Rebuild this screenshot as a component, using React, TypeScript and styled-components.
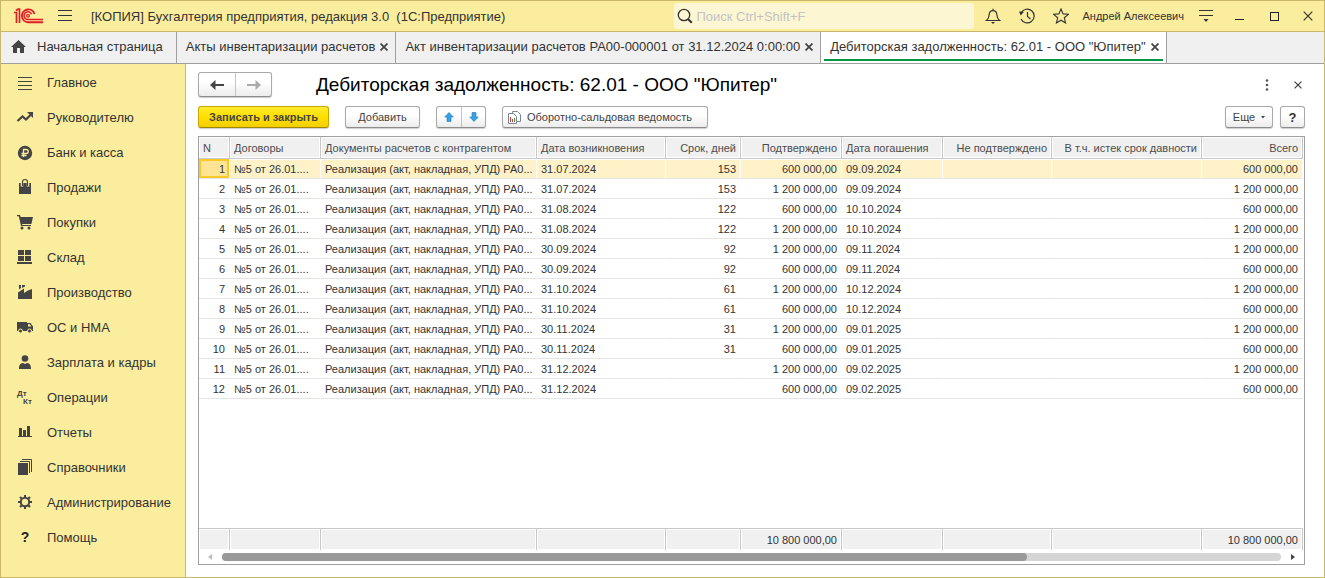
import React from "react";
import styled, { createGlobalStyle, css } from "styled-components";

const GlobalStyle = createGlobalStyle`
  *, *::before, *::after { box-sizing: border-box; }
  body { margin: 0; }
  body, button, input, table { font-family: "Liberation Sans", Arial, sans-serif; }
  button { padding: 0; color: inherit; cursor: pointer; }
  svg { display: block; flex: none; }
`;

const Window = styled.div`
  display: flex;
  flex-direction: column;
  min-height: 100vh;
  border: 1px solid #c9b867;
  background: #fff;
  color: #333;
  font-size: 13px;
`;

const TitleBar = styled.header`
  display: flex;
  align-items: center;
  height: 31px;
  background: #fbed9e;
  border-bottom: 1px solid #c9b867;
  padding: 0 8px 0 12px;
`;

const PlainButton = styled.button<{ $w?: number }>`
  display: flex;
  align-items: center;
  justify-content: center;
  width: ${(p) => p.$w ?? 16}px;
  height: 24px;
  flex: none;
  border: 0;
  background: none;
`;

const AppTitle = styled.h1`
  flex: 1;
  margin: 0 0 0 6px;
  font-size: 13px;
  font-weight: 400;
  white-space: pre;
`;

const SearchBox = styled.label`
  display: flex;
  align-items: center;
  gap: 3px;
  width: 300px;
  height: 26px;
  padding-left: 3px;
  border-radius: 3px;
  background: #fdf6d3;
`;

const SearchInput = styled.input`
  flex: 1;
  min-width: 0;
  border: 0;
  padding: 0;
  outline: 0;
  background: none;
  font-size: 13px;
  &::placeholder { color: #c3c3c3; opacity: 1; }
`;

const Tools = styled.div`
  display: flex;
  align-items: center;
  gap: 18px;
  margin-left: 11px;
`;

const UserLink = styled.a`
  margin: 0 14px 0 13px;
  color: #333;
  font-size: 11px;
  text-decoration: none;
  white-space: nowrap;
`;

const WindowButtons = styled.div`
  display: flex;
  gap: 18px;
  margin-left: 18px;
`;

const TabBar = styled.nav`
  display: flex;
  height: 32px;
  background: #f0f0f0;
  border-bottom: 1px solid #a0a0a0;
`;

const Tab = styled.div<{ $active?: boolean }>`
  display: flex;
  align-items: center;
  padding: 0 3px;
  border-right: 1px solid #a0a0a0;
  background: ${(p) => (p.$active ? "#fff" : "transparent")};
`;

const TabInner = styled.div<{ $active?: boolean; $home?: boolean }>`
  display: flex;
  align-items: center;
  align-self: stretch;
  gap: ${(p) => (p.$home ? 11 : 1)}px;
  margin-bottom: 2px;
  padding: ${(p) => (p.$home ? "2px 10px 0 7px" : "2px 0 0 6px")};
  border-bottom: 2px solid ${(p) => (p.$active ? "#009646" : "transparent")};
`;

const TabLink = styled.a`
  color: #333;
  text-decoration: none;
  white-space: nowrap;
`;

const Body = styled.div`
  display: flex;
  flex: 1;
`;

const Sidebar = styled.nav`
  width: 185px;
  flex: none;
  padding-top: 1px;
  background: #fbed9e;
  border-right: 1px solid #c9b867;
`;

const SideLink = styled.a`
  display: flex;
  align-items: center;
  gap: 13px;
  height: 35px;
  padding-left: 15px;
  color: #333;
  text-decoration: none;
`;

const Main = styled.main`
  display: flex;
  flex: 1;
  flex-direction: column;
  min-width: 0;
  padding: 8px 19px 12px 12px;
`;

const Heading = styled.div`
  display: flex;
  align-items: center;
  gap: 16px;
  height: 25px;
`;

const FormTitle = styled.h2`
  flex: 1;
  margin: 0 0 0 28px;
  color: #000;
  font-size: 19px;
  font-weight: 400;
`;

const Toolbar = styled.div`
  display: flex;
  align-items: center;
  gap: 16px;
  margin: 9px 0 8px;
`;

const Spacer = styled.div`
  flex: 1;
`;

const RightGroup = styled.div`
  display: flex;
  gap: 7px;
`;

const raised = css`
  border: 1px solid #a9a9a9;
  border-bottom-color: #8c8c8c;
  border-radius: 3px;
  background: linear-gradient(#fff 40%, #ececec);
  box-shadow: 0 1px 1px #ccc;
`;

const Button = styled.button<{ $primary?: boolean; $start?: boolean; $w: number }>`
  display: flex;
  align-items: center;
  justify-content: ${(p) => (p.$start ? "flex-start" : "center")};
  gap: 6px;
  width: ${(p) => p.$w}px;
  height: 22px;
  padding: 0 5px;
  font-size: 11px;
  white-space: nowrap;
  color: #444;
  ${raised}
  ${(p) =>
    p.$primary &&
    css`
      border-color: #c8a800;
      border-bottom-color: #a08600;
      background: linear-gradient(#ffea2e, #ffdf00 50%, #f3cf00);
      font-weight: 700;
    `}
`;

const HelpMark = styled.b`
  color: #333;
  font-size: 13px;
`;

const ButtonPair = styled.div<{ $h: number }>`
  display: flex;
  height: ${(p) => p.$h}px;
  ${raised}
`;

const PairButton = styled.button<{ $w: number }>`
  display: flex;
  align-items: center;
  justify-content: center;
  width: ${(p) => p.$w}px;
  border: 0;
  background: none;
  & + & { border-left: 1px solid #c4c4c4; }
`;

const GridPanel = styled.section`
  display: flex;
  flex: 1;
  flex-direction: column;
  border: 1px solid #a0a0a0;
`;

const TableArea = styled.div`
  display: flex;
  flex: 1;
  padding-right: 1px;
`;

const Table = styled.table`
  flex: 1;
  width: 100%;
  table-layout: fixed;
  border-collapse: separate;
  border-spacing: 0;
  font-size: 11px;
`;

type CellProps = { $right?: boolean };

const cell = css<CellProps>`
  padding: 0 4px;
  text-align: ${(p) => (p.$right ? "right" : "left")};
  white-space: nowrap;
`;

const Th = styled.th<CellProps>`
  ${cell}
  height: 22px;
  border-right: 1px solid #c8c8c8;
  border-bottom: 1px solid #c8c8c8;
  background: #f0f0f0;
  box-shadow: inset 0 0 0 1px #fff;
  color: #4c4c4c;
  font-weight: 400;
`;

const Td = styled.td<CellProps & { $selected?: boolean; $current?: boolean }>`
  ${cell}
  height: 20px;
  padding-top: 1px;
  border-right: 1px solid transparent;
  border-bottom: 1px solid #e4e4e4;
  ${(p) =>
    p.$selected &&
    css`
      border-right-color: #fff;
      background: #fff2c8;
      box-shadow: inset 0 1px 0 #fff;
    `}
  ${(p) =>
    p.$current &&
    css`
      background: #fee493;
      box-shadow: inset 0 0 0 2px #fbc926;
    `}
`;

const FillerCell = styled.td`
  padding: 0;
`;

const FootCell = styled.td<CellProps>`
  ${cell}
  height: 22px;
  border-top: 1px solid #c8c8c8;
  border-right: 1px solid #c8c8c8;
  background: #f0f0f0;
  box-shadow: inset 0 0 0 1px #fff;
`;

const ScrollRow = styled.div`
  display: flex;
  align-items: center;
  height: 14px;
  padding: 0 3px;
`;

const ArrowButton = styled(PlainButton)`
  height: 14px;
`;

const ScrollTrack = styled.div`
  flex: 1;
  height: 8px;
  margin: 0 4px;
  border-radius: 4px;
  background: #d5d5d5;
`;

const ScrollThumb = styled.div`
  width: 76%;
  height: 8px;
  border-radius: 4px;
  background: #999;
`;

const Logo = () => (
  <svg width="31" height="16" viewBox="0 0 31 16" fill="none" stroke="#df1f26">
    <path d="M1 4.500h2.500V15M3 2.500 5 1.200h1.500V15" strokeWidth="1.700" />
    <path d="M21.500 6A6.400 6.400 0 1 0 15 14.200H30" strokeWidth="1.900" />
    <path d="M18.600 6.200A3.900 3.900 0 1 0 15 11.600H30" strokeWidth="1.500" />
    <circle cx="15" cy="7.800" r="1.400" strokeWidth="1.300" />
  </svg>
);

const BurgerIcon = () => (
  <svg width="14" height="12" viewBox="0 0 14 12" stroke="#333" shapeRendering="crispEdges">
    <path d="M0 .5h14M0 5.500h14M0 10.500h14" />
  </svg>
);

const SearchIcon = () => (
  <svg width="16" height="16" viewBox="0 0 16 16" fill="none" stroke="#333" strokeWidth="1.3">
    <circle cx="7" cy="7" r="5.700" />
    <path d="m11.200 11.200 3.600 3.600" strokeWidth="2" />
  </svg>
);

const BellIcon = () => (
  <svg width="16" height="16" viewBox="0 0 16 16" fill="none" stroke="#333" strokeWidth="1.2">
    <path d="M1.500 12.500c2-1.500 2.500-3 2.700-6C4.400 4 5.800 2.700 8 2.700S11.600 4 11.800 6.500c.2 3 .7 4.500 2.700 6zM8 .8v2" />
    <path d="M6 14h4l-2 2z" fill="#333" stroke="none" />
  </svg>
);

const HistoryIcon = () => (
  <svg width="16" height="16" viewBox="0 0 16 16" fill="none" stroke="#333" strokeWidth="1.2">
    <path d="M2.200 4.700A6.900 6.900 0 1 1 2 11M8.500 4v4.500l3 2.500" />
    <path d="M0 3.500 5 3.700 1.700 7.500z" fill="#333" stroke="none" />
  </svg>
);

const StarIcon = () => (
  <svg width="16" height="16" viewBox="0 0 16 16" fill="none" stroke="#333" strokeWidth="1.1">
    <path d="m8 1 2.100 4.900 5.300.4-4.100 3.500 1.300 5.200L8 12.200 3.400 15l1.300-5.200L.6 6.300l5.300-.4z" />
  </svg>
);

const ServiceIcon = () => (
  <svg width="14" height="12" viewBox="0 0 14 12" stroke="#333">
    <path d="M0 .5h14M0 5.500h14" shapeRendering="crispEdges" />
    <path d="M4.500 9h5L7 12z" fill="#333" stroke="none" />
  </svg>
);

const MinimizeIcon = () => (
  <svg width="10" height="10" viewBox="0 0 10 10" stroke="#222" shapeRendering="crispEdges">
    <path d="M0 8.500h9" />
  </svg>
);

const MaximizeIcon = () => (
  <svg width="10" height="10" viewBox="0 0 10 10" fill="none" stroke="#222" shapeRendering="crispEdges">
    <path d="M1.500 1.500h8v8h-8z" />
  </svg>
);

const CrossIcon = ({ size = 10, width = 1.2, color = "#333" }) => (
  <svg width={size} height={size} viewBox="0 0 10 10" stroke={color} strokeWidth={width}>
    <path d="m.7.7 8.600 8.600M9.300.7.7 9.300" />
  </svg>
);

const HomeIcon = () => (
  <svg width="15" height="13" viewBox="0 0 15 13" fill="#444">
    <path d="M7.500 0 15 7h-2v6H9V8H6v5H2V7H0z" />
  </svg>
);

const BackArrow = ({ color = "#444", flip = false }) => (
  <svg width="14" height="10" viewBox="0 0 14 10" fill={color}>
    <path d={flip ? "M14 5 8.500 0v4H0v2h8.500v4z" : "M0 5 5.500 0v4H14v2H5.500v4z"} />
  </svg>
);

const MoveArrow = ({ down = false }) => (
  <svg width="10" height="10" viewBox="0 0 10 10" fill="#36a2e6" stroke="#2379ad" strokeWidth=".6">
    <path d={down ? "M5 9.500 .7 5H3V.5h4V5h2.300z" : "M5 .5 .7 5H3v4.500h4V5h2.300z"} />
  </svg>
);

const ReportIcon = () => (
  <svg width="13" height="13" viewBox="0 0 13 13" fill="#fff" stroke="#7b8790">
    <path d="M4.500.5h5l3 3v7h-8z" />
    <path d="M.5 2.500h5l3 3v7h-8z" />
    <path d="M2.500 6v5M4.500 8v3" stroke="#d0443a" />
    <path d="M6.500 7v4" stroke="#3c9b51" />
  </svg>
);

const DotsIcon = () => (
  <svg width="4" height="12" viewBox="0 0 4 12" fill="#555">
    <circle cx="2" cy="1.500" r="1.300" />
    <circle cx="2" cy="6" r="1.300" />
    <circle cx="2" cy="10.500" r="1.300" />
  </svg>
);

const CaretIcon = () => (
  <svg width="4" height="3" viewBox="0 0 4 3" fill="#444">
    <path d="M0 0h4L2 2.500z" />
  </svg>
);

const Triangle = ({ right = false }) => (
  <svg width="4" height="6" viewBox="0 0 4 6" fill={right ? "#444" : "#bbb"}>
    <path d={right ? "M0 0v6l4-3z" : "M4 0v6L0 3z"} />
  </svg>
);

const sideIcons: Record<string, React.ReactNode> = {
  main: <path d="M2 4.500h14M2 8.500h14M2 12.500h14M2 16.500h14" stroke="#444" shapeRendering="crispEdges" />,
  chart: (
    <>
      <path d="m1.500 13 5-4.500 3.500 3L14.500 7" fill="none" stroke="#444" strokeWidth="2.200" />
      <path d="M11 4h6v6z" />
    </>
  ),
  ruble: (
    <>
      <circle cx="9" cy="10" r="7.200" />
      <path d="M7.500 14V6.500h2.700a2 2 0 0 1 0 4H5.500M5.500 12.500h5" fill="none" stroke="#fbed9e" strokeWidth="1.300" />
    </>
  ),
  bag: (
    <>
      <path d="M3 5h12v11H3z" />
      <path d="M6 8.500V5a3 3 0 0 1 6 0v3.500" fill="none" stroke="#fbed9e" strokeWidth="2.600" />
      <path d="M6.500 8V4a2.500 2.500 0 0 1 5 0v4" fill="none" stroke="#444" strokeWidth="1.100" />
    </>
  ),
  cart: (
    <>
      <path d="M1 2h3l.7 2H17l-1.600 7H6l.3 1H15V13H5L2.800 3.300H1z" />
      <circle cx="6" cy="15" r="1.500" />
      <circle cx="13" cy="15" r="1.500" />
    </>
  ),
  store: <path d="M2 2h6v5H2zM9 2h6v5H9zM2 8h6v5H2zM9 8h6v5H9zM1 14h15v2H1z" />,
  factory: <path d="M2 16V9.500L8 5.500V10l4-2.500 4-1.500v10zM3 2h2v3L3 6.500zM6 2h3v1.500L6 5z" />,
  truck: (
    <>
      <path d="M1 4h10v9H1zM11 5h3.500L17 8.500V13h-6z" />
      <path d="M12 6.300h2l1.300 2.200H12z" fill="#fbed9e" />
      <circle cx="4.500" cy="13" r="2" stroke="#fbed9e" />
      <circle cx="13.500" cy="13" r="2" stroke="#fbed9e" />
    </>
  ),
  person: (
    <>
      <circle cx="9" cy="5.500" r="3.300" />
      <path d="M3 16c0-4 1-5.500 4-6l2 1 2-1c3 .5 4 2 4 6z" />
    </>
  ),
  ops: (
    <g fontFamily="Liberation Sans" fontSize="8" fontWeight="700">
      <text x="1" y="8">Дт</text>
      <text x="7" y="16">Кт</text>
    </g>
  ),
  bars: <path d="M3 5h3v8H3zM7 7h3v6H7zM11 3h3v10h-3zM2 13h14v1H2z" />,
  books: (
    <>
      <path d="M2 5h10v12H2z" />
      <path d="M4 3.500h9.500V15M6 1.500h9.500V14" fill="none" stroke="#444" />
    </>
  ),
  gear: (
    <>
      <circle cx="9" cy="9" r="4.200" fill="none" stroke="#444" strokeWidth="2" />
      <path d="M9 2v2.500M9 13.500V16M2 9h2.500M13.500 9H16M4 4l2 2M12 12l2 2M14 4l-2 2M6 12l-2 2" stroke="#444" strokeWidth="2" />
    </>
  ),
  help: (
    <text x="9" y="14" textAnchor="middle" fontFamily="Liberation Sans" fontSize="14" fontWeight="700" fill="#222">?</text>
  ),
};

const sections = [
  ["main", "Главное"],
  ["chart", "Руководителю"],
  ["ruble", "Банк и касса"],
  ["bag", "Продажи"],
  ["cart", "Покупки"],
  ["store", "Склад"],
  ["factory", "Производство"],
  ["truck", "ОС и НМА"],
  ["person", "Зарплата и кадры"],
  ["ops", "Операции"],
  ["bars", "Отчеты"],
  ["books", "Справочники"],
  ["gear", "Администрирование"],
  ["help", "Помощь"],
];

const tabs = [
  "Акты инвентаризации расчетов",
  "Акт инвентаризации расчетов РА00-000001 от 31.12.2024 0:00:00",
  'Дебиторская задолженность: 62.01 - ООО "Юпитер"',
];

const columns: { title: string; width?: number; right?: boolean }[] = [
  { title: "N", width: 31 },
  { title: "Договоры", width: 91 },
  { title: "Документы расчетов с контрагентом" },
  { title: "Дата возникновения", width: 129 },
  { title: "Срок, дней", width: 75, right: true },
  { title: "Подтверждено", width: 101, right: true },
  { title: "Дата погашения", width: 101 },
  { title: "Не подтверждено", width: 109, right: true },
  { title: "В т.ч. истек срок давности", width: 150, right: true },
  { title: "Всего", width: 101, right: true },
];

const contract = "№5 от 26.01....";
const documentName = "Реализация (акт, накладная, УПД) РА0...";
const small = "600 000,00";
const large = "1 200 000,00";
const debts = [
  ["31.07.2024", "153", small, "09.09.2024"],
  ["31.07.2024", "153", large, "09.09.2024"],
  ["31.08.2024", "122", small, "10.10.2024"],
  ["31.08.2024", "122", large, "10.10.2024"],
  ["30.09.2024", "92", large, "09.11.2024"],
  ["30.09.2024", "92", small, "09.11.2024"],
  ["31.10.2024", "61", large, "10.12.2024"],
  ["31.10.2024", "61", small, "10.12.2024"],
  ["30.11.2024", "31", large, "09.01.2025"],
  ["30.11.2024", "31", small, "09.01.2025"],
  ["31.12.2024", "", large, "09.02.2025"],
  ["31.12.2024", "", small, "09.02.2025"],
];

const total = "10 800 000,00";
const totals = ["", "", "", "", "", total, "", "", "", total];

export default function App() {
  return (
    <>
      <GlobalStyle />
      <Window>
        <TitleBar>
          <Logo />
          <PlainButton $w={41} aria-label="Меню"><BurgerIcon /></PlainButton>
          <AppTitle>{"[КОПИЯ] Бухгалтерия предприятия, редакция 3.0  (1С:Предприятие)"}</AppTitle>
          <SearchBox>
            <SearchIcon />
            <SearchInput type="search" placeholder="Поиск Ctrl+Shift+F" aria-label="Поиск" />
          </SearchBox>
          <Tools>
            <PlainButton aria-label="Оповещения"><BellIcon /></PlainButton>
            <PlainButton aria-label="История"><HistoryIcon /></PlainButton>
            <PlainButton aria-label="Избранное"><StarIcon /></PlainButton>
          </Tools>
          <UserLink href="#user">Андрей Алексеевич</UserLink>
          <PlainButton aria-label="Сервис"><ServiceIcon /></PlainButton>
          <WindowButtons>
            <PlainButton aria-label="Свернуть"><MinimizeIcon /></PlainButton>
            <PlainButton aria-label="Развернуть"><MaximizeIcon /></PlainButton>
            <PlainButton aria-label="Закрыть программу"><CrossIcon /></PlainButton>
          </WindowButtons>
        </TitleBar>

        <TabBar aria-label="Открытые окна">
          <Tab>
            <TabInner $home>
              <HomeIcon />
              <TabLink href="#home">Начальная страница</TabLink>
            </TabInner>
          </Tab>
          {tabs.map((name, i) => (
            <Tab key={name} $active={i === 2}>
              <TabInner $active={i === 2}>
                <TabLink href="#tab">{name}</TabLink>
                <PlainButton aria-label="Закрыть вкладку"><CrossIcon size={8} width={2.2} color="#444" /></PlainButton>
              </TabInner>
            </Tab>
          ))}
        </TabBar>

        <Body>
          <Sidebar aria-label="Разделы">
            {sections.map(([icon, name]) => (
              <SideLink key={name} href={`#${icon}`}>
                <svg width="18" height="19" viewBox="0 0 18 19" fill="#444" aria-hidden="true">
                  {sideIcons[icon]}
                </svg>
                {name}
              </SideLink>
            ))}
          </Sidebar>

          <Main>
            <Heading>
              <ButtonPair $h={25}>
                <PairButton $w={36} aria-label="Назад"><BackArrow /></PairButton>
                <PairButton $w={36} aria-label="Вперед"><BackArrow flip color="#aaa" /></PairButton>
              </ButtonPair>
              <FormTitle>Дебиторская задолженность: 62.01 - ООО "Юпитер"</FormTitle>
              <PlainButton aria-label="Действия"><DotsIcon /></PlainButton>
              <PlainButton $w={14} aria-label="Закрыть"><CrossIcon size={8} width={1.3} /></PlainButton>
            </Heading>

            <Toolbar>
              <Button $primary $w={131}>Записать и закрыть</Button>
              <Button $w={75}>Добавить</Button>
              <ButtonPair $h={22}>
                <PairButton $w={24} aria-label="Переместить вверх"><MoveArrow /></PairButton>
                <PairButton $w={24} aria-label="Переместить вниз"><MoveArrow down /></PairButton>
              </ButtonPair>
              <Button $start $w={206}><ReportIcon />Оборотно-сальдовая ведомость</Button>
              <Spacer />
              <RightGroup>
                <Button $w={48}>Еще<CaretIcon /></Button>
                <Button $w={25} aria-label="Справка"><HelpMark>?</HelpMark></Button>
              </RightGroup>
            </Toolbar>

            <GridPanel>
              <TableArea>
                <Table>
                  <colgroup>
                    {columns.map((c) => <col key={c.title} width={c.width} />)}
                  </colgroup>
                  <thead>
                    <tr>
                      {columns.map((c) => <Th key={c.title} scope="col" $right={c.right}>{c.title}</Th>)}
                    </tr>
                  </thead>
                  <tbody>
                    {debts.map(([date, days, sum, due], i) => {
                      const selected = i === 0;
                      return (
                        <tr key={i}>
                          <Td $right $selected={selected} $current={selected}>{i + 1}</Td>
                          <Td $selected={selected}>{contract}</Td>
                          <Td $selected={selected}>{documentName}</Td>
                          <Td $selected={selected}>{date}</Td>
                          <Td $right $selected={selected}>{days}</Td>
                          <Td $right $selected={selected}>{sum}</Td>
                          <Td $selected={selected}>{due}</Td>
                          <Td $selected={selected} />
                          <Td $selected={selected} />
                          <Td $right $selected={selected}>{sum}</Td>
                        </tr>
                      );
                    })}
                    <tr aria-hidden="true"><FillerCell colSpan={10} /></tr>
                  </tbody>
                  <tfoot>
                    <tr>
                      {totals.map((t, i) => <FootCell key={i} $right>{t}</FootCell>)}
                    </tr>
                  </tfoot>
                </Table>
              </TableArea>
              <ScrollRow>
                <ArrowButton aria-label="Прокрутить влево"><Triangle /></ArrowButton>
                <ScrollTrack><ScrollThumb /></ScrollTrack>
                <ArrowButton aria-label="Прокрутить вправо"><Triangle right /></ArrowButton>
              </ScrollRow>
            </GridPanel>
          </Main>
        </Body>
      </Window>
    </>
  );
}
